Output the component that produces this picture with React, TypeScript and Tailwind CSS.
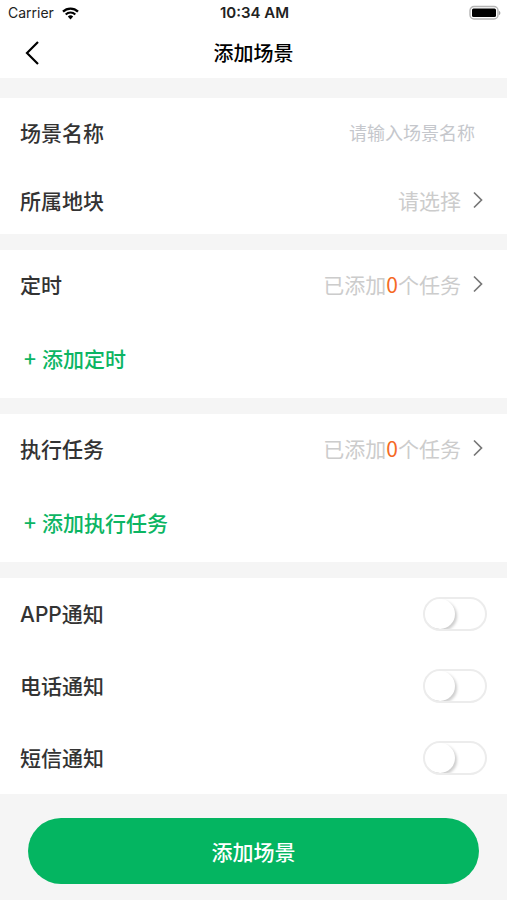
import type { ReactNode } from "react";

type TaskGroup = {
  title: string;
  addLabel: string;
  count: number;
};

type Notice = {
  id: string;
  label: string;
};

const TASK_GROUPS: TaskGroup[] = [
  { title: "定时", addLabel: "添加定时", count: 0 },
  { title: "执行任务", addLabel: "添加执行任务", count: 0 },
];

const NOTICES: Notice[] = [
  { id: "notice-app", label: "APP通知" },
  { id: "notice-phone", label: "电话通知" },
  { id: "notice-sms", label: "短信通知" },
];

function StatusBar() {
  return (
    <div className="grid h-7 grid-cols-[1fr_auto_1fr] items-center pr-1.5 pb-0.5 pl-2 font-['Inter',sans-serif] leading-5 text-[#222]">
      <div className="flex items-center gap-2 text-sm">
        <span>Carrier</span>
        <svg width="17" height="13" viewBox="0 0 17 13" fill="none" aria-hidden="true">
          <path d="M1 4.6a10.7 10.7 0 0 1 15 0" stroke="#000" strokeWidth="2.3" />
          <path d="M3.7 7.5a6.8 6.8 0 0 1 9.6 0" stroke="#000" strokeWidth="2.1" />
          <path d="M8.5 12.4 5.8 9.6a3.8 3.8 0 0 1 5.4 0z" fill="#000" />
        </svg>
      </div>
      <span className="text-center text-[15px] font-semibold whitespace-nowrap">
        10:34 AM
      </span>
      <svg
        className="justify-self-end"
        width="32"
        height="16"
        viewBox="0 0 32 16"
        aria-hidden="true"
      >
        <rect x="1" y="1.500" width="28" height="12.500" rx="4" fill="#fff" stroke="#b5b5b5" strokeWidth="1.400" />
        <rect x="3" y="3.500" width="24" height="8.500" rx="1.500" fill="#000" />
        <path d="M30.100 6v4c.9-.3 1.200-1 1.200-2s-.3-1.700-1.200-2z" fill="#999" />
      </svg>
    </div>
  );
}

function Chevron() {
  return (
    <svg width="10" height="18" viewBox="0 0 10 18" fill="none" aria-hidden="true">
      <path d="M1 1.500 8.500 9 1 16.500" stroke="#777" strokeWidth="1.700" />
    </svg>
  );
}

function PickerRow({ label, children }: { label: string; children: ReactNode }) {
  return (
    <button
      type="button"
      className="flex h-17 w-full items-center justify-between pr-6 pl-5"
    >
      <span className="font-medium text-[#333]">{label}</span>
      <span className="flex items-center gap-3 text-[#ccc]">
        <span>{children}</span>
        <Chevron />
      </span>
    </button>
  );
}

export default function App() {
  return (
    <div className="min-h-screen bg-[#f5f5f5] font-['Noto_Sans_CJK_SC',sans-serif] text-[21px] leading-8">
      <header className="bg-white">
        <StatusBar />
        <div className="grid h-[50px] grid-cols-3 items-center px-6">
          <button type="button" aria-label="返回" className="w-fit">
            <svg width="16" height="24" viewBox="0 0 16 24" fill="none">
              <path d="M14 1 3 12l11 11" stroke="#000" strokeWidth="2.200" />
            </svg>
          </button>
          <h1 className="text-center text-xl font-medium whitespace-nowrap text-black">
            添加场景
          </h1>
        </div>
      </header>

      <main className="flex flex-col gap-4 pt-5">
        <section className="bg-white">
          <div className="flex h-17 items-center justify-between gap-4 pr-8 pl-5">
            <label htmlFor="scene-name" className="shrink-0 font-medium text-[#333]">
              场景名称
            </label>
            <input
              id="scene-name"
              type="text"
              placeholder="请输入场景名称"
              className="w-full min-w-0 text-right text-lg text-[#333] outline-none placeholder:text-[#c5c7cc]"
            />
          </div>
          <PickerRow label="所属地块">请选择</PickerRow>
        </section>

        {TASK_GROUPS.map((group) => (
          <section key={group.title} className="bg-white">
            <PickerRow label={group.title}>
              已添加<span className="text-[#f56a24]">{group.count}</span>个任务
            </PickerRow>
            <div className="flex h-20 items-center px-6">
              <button
                type="button"
                className="flex items-center gap-1.5 font-medium text-[#0cb563]"
              >
                <span>+</span>
                {group.addLabel}
              </button>
            </div>
          </section>
        ))}

        <section className="bg-white">
          {NOTICES.map((notice) => (
            <div
              key={notice.id}
              className="flex h-18 items-center justify-between px-5"
            >
              <label
                htmlFor={notice.id}
                className="pt-0.5 font-['Inter','Noto_Sans_CJK_SC',sans-serif] font-medium text-[#333]"
              >
                {notice.label}
              </label>
              <input
                id={notice.id}
                type="checkbox"
                role="switch"
                className="h-[34px] w-16 appearance-none overflow-hidden rounded-full border-2 border-[#ececec] bg-white before:block before:size-[30px] before:rounded-full before:bg-white before:shadow-[2px_2px_3px_rgba(0,0,0,0.2)] checked:border-[#04b561] checked:bg-[#04b561] checked:before:ml-auto"
              />
            </div>
          ))}
        </section>
      </main>

      <footer className="px-7 pt-6 pb-4">
        <button
          type="button"
          className="h-[66px] w-full rounded-full bg-[#04b561] font-medium text-white"
        >
          添加场景
        </button>
      </footer>
    </div>
  );
}
